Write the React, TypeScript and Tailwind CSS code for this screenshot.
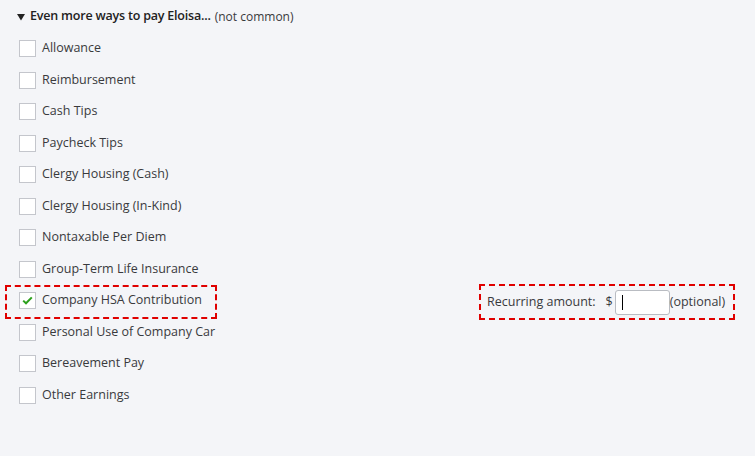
import React from "react";

const items = [
  "Allowance",
  "Reimbursement",
  "Cash Tips",
  "Paycheck Tips",
  "Clergy Housing (Cash)",
  "Clergy Housing (In-Kind)",
  "Nontaxable Per Diem",
  "Group-Term Life Insurance",
  "Company HSA Contribution",
  "Personal Use of Company Car",
  "Bereavement Pay",
  "Other Earnings",
];

function Box({ checked }: { checked?: boolean }) {
  return (
    <div className="w-[17px] h-[17px] bg-white border border-[#c4c6cc] flex items-center justify-center shrink-0">
      {checked && (
        <svg width="11" height="9" viewBox="0 0 11 9">
          <path d="M1.2 4.6 L4 7.3 L9.8 1.4" fill="none" stroke="#2ca01c" strokeWidth="2" />
        </svg>
      )}
    </div>
  );
}

export default function App() {
  return (
    <div
      className="w-[755px] h-[456px] bg-[#f4f5f8] text-[#393a3d] overflow-hidden"
      style={{ fontFamily: "'Open Sans', 'Liberation Sans', sans-serif" }}
    >
      <div className="pt-[10px] pl-[17px] flex items-center h-[23px] text-[12.5px]">
        <svg width="8" height="8" viewBox="0 0 8 8" className="mr-[5px]">
          <path d="M0 1 L8 1 L4 7.5 Z" fill="#222" />
        </svg>
        <span className="font-semibold text-[#222] tracking-[-0.2px]">Even more ways to pay Eloisa...</span>
        <span className="ml-[4px] text-[12px] text-[#393a3d]">(not common)</span>
      </div>
      <div className="flex flex-col mt-[10px]">
        {items.map((it, i) => (
          <div key={it} className="relative h-[31.5px] flex items-center pl-[19px]">
            <Box checked={i === 8} />
            <span className="ml-[6px] text-[12.5px]">{it}</span>
            {i === 8 && (
              <>
                <div className="absolute left-[5px] top-[0px] w-[212px] h-[34px] border-2 border-dashed border-[#e00000]" />
                <div className="absolute left-[479px] top-[-1px] w-[256px] h-[36px] border-2 border-dashed border-[#e00000] flex items-center pl-[6px] text-[12.5px]">
                  <span>Recurring amount:</span>
                  <span className="ml-[10px]">$</span>
                  <div className="ml-[2px] w-[55px] h-[25px] bg-white border border-[#b9bcc2] rounded-[3px] flex items-center pl-[6px]">
                    <div className="w-[1px] h-[15px] bg-black" />
                  </div>
                  <span>(optional)</span>
                </div>
              </>
            )}
          </div>
        ))}
      </div>
    </div>
  );
}
